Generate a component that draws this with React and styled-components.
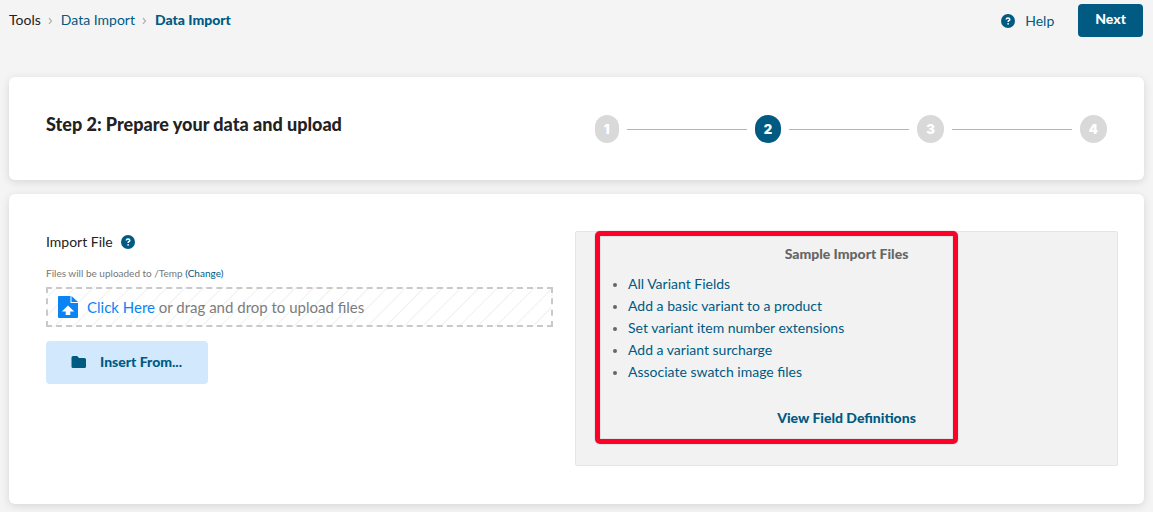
import React, { Fragment } from "react";
import styled, { createGlobalStyle } from "styled-components";

const steps = [1, 2, 3, 4];
const currentStep = 2;

const sampleFiles = [
  "All Variant Fields",
  "Add a basic variant to a product",
  "Set variant item number extensions",
  "Add a variant surcharge",
  "Associate swatch image files",
];

const GlobalStyle = createGlobalStyle`
  * {
    box-sizing: border-box;
  }

  body {
    margin: 0;
    background: #f4f4f4;
    color: #222;
    font-family: Lato, "Liberation Sans", sans-serif;
    font-size: 14px;
    line-height: 22px;
  }

  a {
    color: #005a82;
    text-decoration: none;
  }

  a:hover {
    text-decoration: underline;
  }

  button {
    font: inherit;
    border: none;
    cursor: pointer;
  }
`;

const Page = styled.main`
  padding: 4px 9px 0;
`;

const TopBar = styled.header`
  display: flex;
  align-items: center;
  justify-content: space-between;
  height: 33px;
  margin-bottom: 40px;
`;

const Breadcrumbs = styled.nav`
  display: flex;
  align-items: center;
  gap: 4px;
  padding-bottom: 2px;
`;

const Crumb = styled.a`
  color: ${({ $root }) => ($root ? "#222" : "#005a82")};
  font-weight: ${({ $current }) => ($current ? 900 : 400)};
`;

const Actions = styled.div`
  display: flex;
  align-items: center;
  gap: 24px;
`;

const HelpLink = styled.a`
  display: flex;
  align-items: center;
  gap: 10px;
`;

const NextButton = styled.button`
  height: 33px;
  padding: 0 17px 3px;
  margin-right: 1px;
  border-radius: 4px;
  background: #005a82;
  color: #fff;
  font-weight: 900;
`;

const Card = styled.section`
  padding: 37px;
  margin-bottom: 14px;
  border-radius: 6px;
  background: #fff;
  box-shadow: 0 2px 8px rgba(0, 0, 0, 0.12);

  &:last-child {
    margin-bottom: 8px;
  }
`;

const StepCard = styled(Card)`
  display: flex;
  justify-content: space-between;
  align-items: flex-start;
`;

const StepTitle = styled.h1`
  margin: 0;
  font-size: 18px;
  line-height: 20px;
  font-weight: 900;
`;

const Stepper = styled.div`
  display: flex;
  align-items: center;
  gap: 8px;
  padding-top: 1px;
`;

const StepDot = styled.span`
  padding: 0 9px;
  border-radius: 14px;
  background: ${({ $active }) => ($active ? "#005a82" : "#d9d9d9")};
  color: #fff;
  font-family: Inter, sans-serif;
  font-size: 13px;
  font-weight: 900;
  line-height: 28px;
`;

const StepLine = styled.span`
  width: 120px;
  height: 1px;
  background: #b5b5b5;
`;

const ImportCard = styled(Card)`
  display: grid;
  grid-template-columns: 507fr 543fr;
  gap: 22px;
  padding: 37px 26px 38px 37px;
`;

const FieldLabel = styled.div`
  display: flex;
  align-items: center;
  gap: 8px;
`;

const UploadPath = styled.p`
  margin: 12px 0 5px;
  color: #777;
  font-size: 10px;
  line-height: 17px;
`;

const DropZone = styled.label`
  display: flex;
  align-items: center;
  gap: 9px;
  height: 40px;
  padding: 0 10px;
  border: 2px dashed #c9c9c9;
  background: repeating-linear-gradient(
    -45deg,
    #fff 0,
    #fff 11px,
    #f0f0f0 12px,
    #fff 13px
  );
  color: #7c7c7c;
  font-size: 15px;
  cursor: pointer;

  b {
    color: #0a84f5;
    font-weight: 400;
  }
`;

const FileInput = styled.input`
  position: absolute;
  width: 1px;
  height: 1px;
  opacity: 0;
`;

const InsertButton = styled.button`
  display: flex;
  align-items: center;
  gap: 13px;
  height: 43px;
  margin-top: 14px;
  padding: 0 26px 1px 25px;
  border-radius: 4px;
  background: #d2e9fd;
  color: #005a82;
  font-weight: 900;
`;

const SamplePanel = styled.aside`
  position: relative;
  padding: 11px 20px 36px;
  border: 1px solid #e5e5e5;
  border-radius: 2px;
  background: #f2f2f2;
  color: #666;
  text-align: center;
`;

const Highlight = styled.div`
  position: absolute;
  top: -1px;
  left: 19px;
  width: 363px;
  height: 213px;
  border: 5px solid #ff0029;
  border-radius: 5px;
  box-shadow: 0 0 1px #666, inset 0 0 1px #666;
  pointer-events: none;
`;

const PanelTitle = styled.h2`
  margin: 0 0 8px;
  font-size: 14px;
  line-height: 22px;
  font-weight: 900;
`;

const FileList = styled.ul`
  margin: 0 0 24px;
  padding-left: 32px;
  text-align: left;

  li::marker {
    font-size: 12px;
  }
`;

const DefinitionsLink = styled.a`
  font-weight: 900;
`;

const HelpIcon = () => (
  <svg width="14" height="14" viewBox="0 0 14 14" aria-hidden="true">
    <circle cx="7" cy="7" r="7" fill="#005a82" />
    <path
      d="M5.2 5.5C5.3 4.4 6 3.9 7 3.9s1.8.6 1.8 1.5c0 1.3-1.7 1.3-1.7 2.5"
      fill="none"
      stroke="#fff"
      strokeWidth="1.5"
    />
    <circle cx="7.1" cy="9.8" r="0.9" fill="#fff" />
  </svg>
);

const Chevron = () => (
  <svg width="12" height="8" viewBox="0 0 12 8" aria-hidden="true">
    <path d="M4 2 6.5 5 4 8" fill="none" stroke="#b3b3b3" strokeWidth="1.2" />
  </svg>
);

const UploadIcon = () => (
  <svg width="20" height="22" viewBox="0 0 20 22" aria-hidden="true">
    <path
      d="M1 0h11.500v7H20v14a1 1 0 0 1-1 1H1a1 1 0 0 1-1-1V1a1 1 0 0 1 1-1z"
      fill="#0a84f5"
    />
    <path d="M13.500 0l6.500 6h-6.500z" fill="#0a84f5" />
    <path d="M10 9.5l6.200 6h-3.900v3.500H7.700v-3.500H3.800z" fill="#fff" />
  </svg>
);

const FolderIcon = () => (
  <svg width="16" height="14" viewBox="0 0 16 14" aria-hidden="true">
    <path
      d="M2 1h4.200l1.800 2h5.500a1.500 1.500 0 0 1 1.500 1.500v7a1.500 1.500 0 0 1-1.500 1.500H2a1.500 1.500 0 0 1-1.500-1.500v-9A1.500 1.500 0 0 1 2 1z"
      fill="#005a82"
    />
  </svg>
);

const App = () => {
  return (
    <Page>
      <GlobalStyle />

      <TopBar>
        <Breadcrumbs aria-label="Breadcrumb">
          <Crumb href="#tools" $root>
            Tools
          </Crumb>
          <Chevron />
          <Crumb href="#imports">Data Import</Crumb>
          <Chevron />
          <Crumb href="#import" $current>
            Data Import
          </Crumb>
        </Breadcrumbs>
        <Actions>
          <HelpLink href="#help">
            <HelpIcon />
            Help
          </HelpLink>
          <NextButton type="button">Next</NextButton>
        </Actions>
      </TopBar>

      {/* Wizard progress */}
      <StepCard>
        <StepTitle>Step 2: Prepare your data and upload</StepTitle>
        <Stepper>
          {steps.map((step) => (
            <Fragment key={step}>
              {step > 1 && <StepLine />}
              <StepDot $active={step === currentStep}>{step}</StepDot>
            </Fragment>
          ))}
        </Stepper>
      </StepCard>

      {/* Upload form */}
      <ImportCard>
        <div>
          <FieldLabel>
            <label htmlFor="import-file">Import File</label>
            <HelpIcon />
          </FieldLabel>
          <UploadPath>
            Files will be uploaded to /Temp <a href="#change">(Change)</a>
          </UploadPath>
          <DropZone>
            <FileInput id="import-file" type="file" />
            <UploadIcon />
            <span>
              <b>Click Here</b> or drag and drop to upload files
            </span>
          </DropZone>
          <InsertButton type="button">
            <FolderIcon />
            Insert From...
          </InsertButton>
        </div>

        <SamplePanel>
          <PanelTitle>Sample Import Files</PanelTitle>
          <FileList>
            {sampleFiles.map((name) => (
              <li key={name}>
                <a href="#sample">{name}</a>
              </li>
            ))}
          </FileList>
          <DefinitionsLink href="#definitions">
            View Field Definitions
          </DefinitionsLink>
          <Highlight />
        </SamplePanel>
      </ImportCard>
    </Page>
  );
};

export default App;
